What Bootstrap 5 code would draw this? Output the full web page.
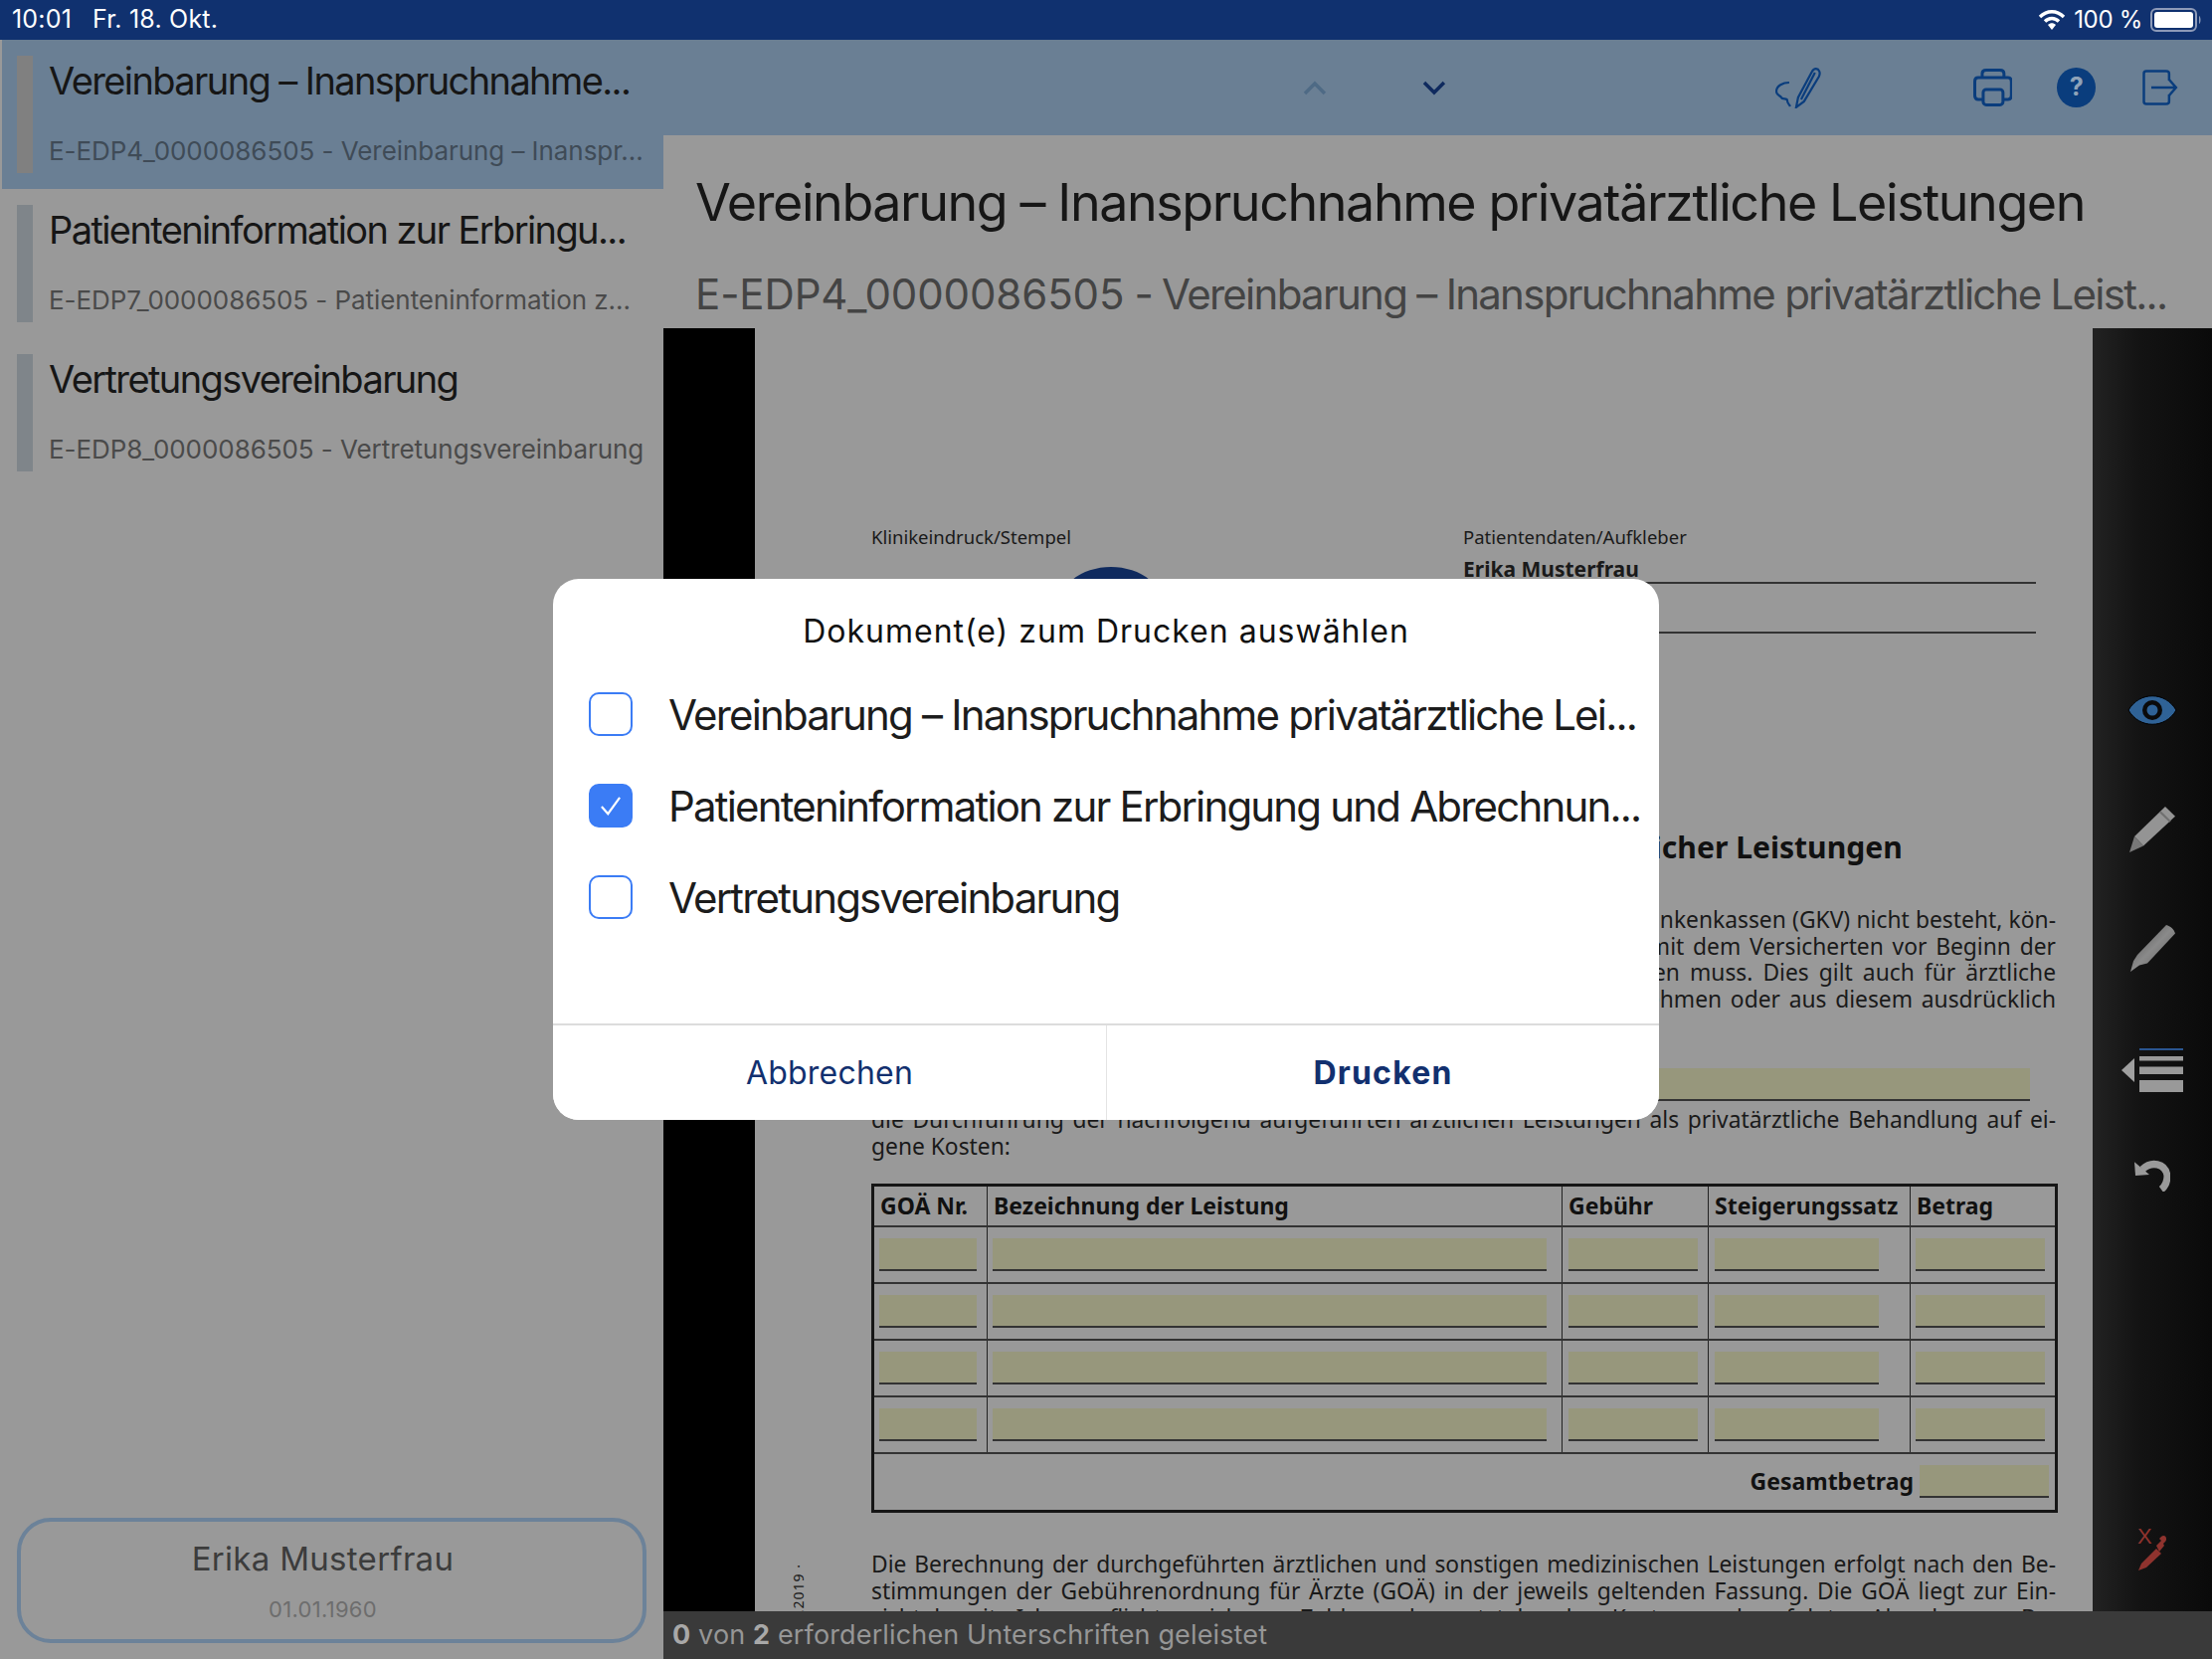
<!DOCTYPE html>
<html lang="de">
<head>
  <meta charset="UTF-8">
  <title>Dokumente drucken</title>
  <link rel="stylesheet" href="https://cdn.jsdelivr.net/npm/bootstrap@5.3.0/dist/css/bootstrap.min.css">
  <style>
    body {
      width: 2224px;
      height: 1668px;
      overflow: hidden;
      background: #999;
      color: #161616;
      font-family: Inter, "Noto Sans", sans-serif;
      position: relative;
    }
    .status-bar {
      height: 40px;
      background: #10316f;
      color: #fff;
      font-size: 24px;
      padding: 0 10px 0 12px;
    }
    .status-clock { font-size: 25px; letter-spacing: 0.2px; }
    .status-date { font-size: 25px; letter-spacing: 0.2px; margin-left: 21px; }
    .status-level { letter-spacing: -0.3px; }
    .app-body { height: 1628px; }

    .doc-sidebar { width: 667px; height: 1628px; }
    .doc-list .list-group-item {
      height: 150px;
      padding: 16px 0 16px 17px;
      background: transparent;
      border: 0;
      border-radius: 0;
      color: #161616;
      display: flex;
      gap: 16px;
    }
    .doc-list .list-group-item.active { background: #6a7f94; box-shadow: inset 2px 0 #999; }
    .doc-bar { width: 16px; height: 118px; background: #7f858a; flex: none; }
    .active .doc-bar { background: #808080; }
    .doc-title {
      font-size: 38px;
      line-height: 46px;
      margin-top: 2px;
      letter-spacing: -1.6px;
      white-space: nowrap;
    }
    .doc-sub {
      font-size: 26px;
      line-height: 32px;
      margin-top: 32px;
      color: #4a4a4a;
      letter-spacing: -0.06px;
      white-space: nowrap;
    }
    .active .doc-sub { color: #3f4b57; }
    .patient-box {
      margin: auto 17px 16px;
      height: 126px;
      padding-right: 18px;
      border: 4px solid #6c8299;
      border-radius: 34px;
    }
    .patient-name { font-size: 33px; line-height: 40px; color: #3c3c3c; letter-spacing: 0.3px; }
    .patient-birth { font-size: 22px; line-height: 28px; margin-top: 17px; color: #6d6d6d; letter-spacing: 0.3px; }

    .main-col { width: 1557px; }
    .tool-bar {
      height: 96px;
      background: #6a7f94;
      padding-right: 34px;
    }
    .tool-up { margin-left: 643px; }
    .tool-down { margin-left: 96px; }
    .tool-sign { margin-left: 331px; }
    .tool-print { margin-left: 152px; }
    .tool-help {
      margin-left: 45px;
      width: 39px;
      height: 40px;
      background: #0a3d7d;
      color: #8fa3b8;
      font-size: 25px;
      font-weight: 700;
    }
    .tool-exit { margin-left: 47px; }

    .page-head { height: 194px; padding: 37px 0 0 32px; }
    .page-title { font-size: 52px; line-height: 62px; letter-spacing: -1.42px; white-space: nowrap; }
    .page-sub { font-size: 42px; line-height: 50px; margin-top: 36px; color: #444; letter-spacing: -1.73px; white-space: nowrap; }
    .page-sub-id { letter-spacing: -0.12px; }

    .pdf-area { height: 1290px; }
    .pdf-strip { width: 92px; background: #000; flex: none; }
    .pdf-page {
      width: 1345px;
      flex: none;
      position: relative;
      overflow: hidden;
      padding: 198px 37px 0 117px;
      font-family: "Noto Sans", sans-serif;
      font-size: 22.8px;
      color: #1a1a1a;
    }
    .stamp-col { width: 595px; position: relative; }
    .patient-col { width: 576px; }
    .stamp-label { font-size: 18.5px; line-height: 24px; }
    .stamp-arc {
      position: absolute;
      left: 186px;
      top: 42px;
    }
    .sticker-line { height: 50px; border-bottom: 2px solid #333; }
    .sticker-line.first {
      height: 31px;
      font-weight: 700;
      font-size: 21px;
      line-height: 33px;
    }
    .form-heading {
      font-size: 30.1px;
      font-weight: 700;
      line-height: 40px;
      margin-top: 195px;
      color: #111;
      white-space: nowrap;
    }
    .form-lines { margin-top: 40px; line-height: 26.5px; }
    .just-line { text-align: justify; text-align-last: justify; }
    .field-row { margin-top: 56px; padding-right: 26px; line-height: 30px; }
    .fill-box { background: #97977c; border-bottom: 2px solid #333; height: 33px; }
    .field-row .fill-box { flex-grow: 1; margin-left: 12px; }
    .after-field { margin-top: 5px; line-height: 27px; }

    .goa-table {
      --bs-table-bg: transparent;
      --bs-table-color: #111;
      --bs-table-border-color: #222;
      width: 1190px;
      margin: 24px 0 0;
      table-layout: fixed;
      border: 3px solid #161616;
      border-collapse: collapse;
    }
    .goa-table > :not(caption) > * > * { padding: 0; border-width: 1px 1px; border-color: #222; }
    .goa-table tr { border-width: 2px 0; border-color: #333; }
    .goa-table th { height: 41px; font-size: 23px; font-weight: 700; padding-left: 6px; line-height: 28px; white-space: nowrap; vertical-align: middle; }
    .goa-table td { height: 57px; vertical-align: middle; }
    .total-row { padding-right: 6px; height: 56px; }
    .total-label { font-size: 23px; font-weight: 700; margin-right: 6px; }
    .total-row .fill-box { width: 130px; }
    .end-text { margin-top: 38px; line-height: 27px; }
    .side-note {
      position: absolute;
      left: 36px;
      top: 1242px;
      writing-mode: vertical-rl;
      transform: rotate(180deg);
      font-size: 14px;
      line-height: 16px;
      letter-spacing: 1px;
      white-space: nowrap;
    }

    .tool-rail {
      width: 120px;
      flex: none;
      padding: 368px 0 40px;
      background: linear-gradient(90deg, #222 0%, #131313 40%, #0a0a0a 100%);
    }
    .rail-pen { margin-top: 80px; }
    .rail-marker { margin-top: 73px; }
    .rail-list { margin-top: 77px; }
    .rail-undo { margin-top: 66px; }
    .rail-sign { margin-top: auto; }

    .sign-count {
      height: 48px;
      background: #3a3a3a;
      color: #969696;
      font-size: 27px;
      line-height: 48px;
      padding-left: 9px;
      letter-spacing: 0.14px;
    }
    .sign-count strong { color: #a8a8a8; }

    .print-dialog {
      position: absolute;
      left: 556px;
      top: 582px;
      width: 1112px;
      height: 544px;
      background: #fff;
      border: 0;
      border-radius: 26px;
      overflow: hidden;
    }
    .dialog-title { font-size: 32px; line-height: 40px; text-align: center; margin-top: 33px; letter-spacing: 1px; color: #111; }
    .dialog-rows { margin-top: 41px; padding-left: 36px; }
    .dialog-rows .form-check {
      height: 92px;
      margin: 0;
      padding: 0;
      display: flex;
      align-items: flex-start;
      gap: 36px;
    }
    .dialog-rows .print-check[type=checkbox] {
      float: none;
      width: 44px;
      height: 44px;
      margin: 0;
      border: 2px solid #3b7cf5;
      border-radius: 10px;
      flex: none;
    }
    .dialog-rows .print-check:checked[type=checkbox] {
      background-color: #3b7cf5;
      border-color: #3b7cf5;
      --bs-form-check-bg-image: url("data:image/svg+xml,%3csvg xmlns='http://www.w3.org/2000/svg' viewBox='0 0 44 44'%3e%3cpath fill='none' stroke='%23fff' stroke-width='2.4' d='M12 23l7 8L32 13'/%3e%3c/svg%3e");
    }
    .print-label { font-size: 42px; line-height: 46px; letter-spacing: -1.82px; white-space: nowrap; color: #1c1c1c; }
    .dialog-actions { margin-top: auto; height: 97px; border-top: 2px solid #dcdcdc; }
    .dialog-btn {
      width: 50%;
      border: 0;
      border-radius: 0;
      background: #fff;
      color: #12306f;
      font-size: 32px;
      line-height: 40px;
      letter-spacing: 0.2px;
      padding: 0;
    }
    .dialog-btn + .dialog-btn { border-left: 1px solid #e4e4e4; font-weight: 700; letter-spacing: 1.2px; }
  </style>
</head>
<body>
  <div class="status-bar d-flex align-items-center justify-content-between">
    <div><span class="status-clock">10:01</span><span class="status-date">Fr. 18. Okt.</span></div>
    <div class="d-flex align-items-center gap-2">
      <svg width="28" height="20" viewBox="0 0 28 20">
        <path d="M2 7C9 0 19 0 26 7" fill="none" stroke="#fff" stroke-width="3.4"/>
        <path d="M7 11.5C11 7.5 17 7.5 21 11.5" fill="none" stroke="#fff" stroke-width="3.4"/>
        <path d="M10 15C12.500 12.800 15.500 12.800 18 15L14 20Z" fill="#fff"/>
      </svg>
      <span class="status-level">100 %</span>
      <svg width="52" height="24" viewBox="0 0 52 24">
        <rect x="1" y="1" width="45" height="22" rx="5" fill="none" stroke="#8d9ab8" stroke-width="2"/>
        <rect x="4" y="4" width="39" height="16" rx="3" fill="#fff"/>
        <path d="M49 8C51 9 51 15 49 16Z" fill="#8d9ab8"/>
      </svg>
    </div>
  </div>

  <div class="app-body d-flex">
    <aside class="doc-sidebar d-flex flex-column">
      <div class="list-group list-group-flush doc-list">
        <div class="list-group-item active">
          <div class="doc-bar"></div>
          <div>
            <div class="doc-title">Vereinbarung – Inanspruchnahme...</div>
            <div class="doc-sub">E-EDP4_0000086505 - Vereinbarung – Inanspr...</div>
          </div>
        </div>
        <div class="list-group-item">
          <div class="doc-bar"></div>
          <div>
            <div class="doc-title">Patienteninformation zur Erbringu...</div>
            <div class="doc-sub">E-EDP7_0000086505 - Patienteninformation z...</div>
          </div>
        </div>
        <div class="list-group-item">
          <div class="doc-bar"></div>
          <div>
            <div class="doc-title">Vertretungsvereinbarung</div>
            <div class="doc-sub">E-EDP8_0000086505 - Vertretungsvereinbarung</div>
          </div>
        </div>
      </div>
      <div class="patient-box d-flex flex-column align-items-center justify-content-center">
        <div class="patient-name">Erika Musterfrau</div>
        <div class="patient-birth">01.01.1960</div>
      </div>
    </aside>

    <div class="main-col d-flex flex-column">
      <div class="tool-bar d-flex align-items-center">
        <svg class="tool-up" width="24" height="15" viewBox="0 0 24 15"><path d="M2 13L12 3L22 13" fill="none" stroke="#4e6a85" stroke-width="3.500"/></svg>
        <svg class="tool-down" width="24" height="15" viewBox="0 0 24 15"><path d="M2 2L12 12L22 2" fill="none" stroke="#0f2a5e" stroke-width="3.500"/></svg>
        <svg class="tool-sign" width="47" height="41" viewBox="0 0 47 41" fill="none" stroke="#0a3d7d" stroke-width="2.200">
          <path d="M37 4L23 30L21 40L29 34L44 9C46 5 44 1 41 1C39 1 38 2 37 4Z"/>
          <path d="M40 5L26 32"/>
          <path d="M14 15C8 15 1 18 1 24C1 28 5 28 6 30C7 33 12 30 12 33C12 36 14 37 15 39"/>
        </svg>
        <svg class="tool-print" width="40" height="38" viewBox="0 0 40 38" fill="none" stroke="#0a3d7d" stroke-width="3">
          <path d="M9 9V5Q9 1.500 13 1.500H27Q31 1.500 31 5V9"/>
          <path d="M9 31H5Q1.500 31 1.500 27V13Q1.500 9 5 9H35Q38.500 9 38.500 13V27Q38.500 31 35 31H31"/>
          <rect x="10" y="21" width="20" height="15.500" rx="3"/>
        </svg>
        <div class="tool-help rounded-circle d-flex align-items-center justify-content-center">?</div>
        <svg class="tool-exit" width="36" height="36" viewBox="0 0 36 36" fill="none" stroke="#0a3d7d" stroke-width="2.500">
          <path d="M27 11V4Q27 1.500 24 1.500H4Q1.500 1.500 1.500 4V32Q1.500 34.500 4 34.500H24Q27 34.500 27 32V25"/>
          <path d="M9 18H34M27 10L34 18L27 26"/>
        </svg>
      </div>

      <div class="page-head">
        <div class="page-title">Vereinbarung – Inanspruchnahme privatärztliche Leistungen</div>
        <div class="page-sub"><span class="page-sub-id">E-EDP4_0000086505</span> - Vereinbarung – Inanspruchnahme privatärztliche Leist...</div>
      </div>

      <div class="pdf-area d-flex">
        <div class="pdf-strip"></div>
        <div class="pdf-page">
          <div class="d-flex">
            <div class="stamp-col">
              <div class="stamp-label">Klinikeindruck/Stempel</div>
              <svg class="stamp-arc" width="110" height="20" viewBox="0 0 110 20"><ellipse cx="55" cy="44" rx="55" ry="44" fill="#0f2a5e"/></svg>
            </div>
            <div class="patient-col">
              <div class="stamp-label">Patientendaten/Aufkleber</div>
              <div class="sticker-line first mt-1">Erika Musterfrau</div>
              <div class="sticker-line"></div>
            </div>
          </div>
          <div class="form-heading">Vereinbarung über die Inanspruchnahme privatärztlicher Leistungen</div>
          <div class="form-lines">
            <div class="just-line">Wenn eine Leistungspflicht für die Behandlung durch die gesetzlichen Krankenkassen (GKV) nicht besteht, kön-</div>
            <div class="just-line">nen diese Leistungen nur erbracht werden, wenn der Arzt dies vorher mit dem Versicherten vor Beginn der</div>
            <div class="just-line">Behandlung schriftlich vereinbart und der Versicherte dies unterzeichnen muss. Dies gilt auch für ärztliche</div>
            <div class="just-line">Leistungen, die von den gesetzlichen Krankenkassen sonst nicht übernehmen oder aus diesem ausdrücklich</div>
          </div>
          <div class="field-row d-flex align-items-end">
            <span>Hiermit beauftrage ich als Patient</span>
            <div class="fill-box"></div>
          </div>
          <div class="after-field">
            <div class="just-line">die Durchführung der nachfolgend aufgeführten ärztlichen Leistungen als privatärztliche Behandlung auf ei-</div>
            <div>gene Kosten:</div>
          </div>
          <table class="table goa-table">
            <colgroup><col style="width:115px"><col style="width:578px"><col style="width:147px"><col style="width:203px"><col style="width:147px"></colgroup>
            <thead>
              <tr><th>GOÄ Nr.</th><th>Bezeichnung der Leistung</th><th>Gebühr</th><th>Steigerungssatz</th><th>Betrag</th></tr>
            </thead>
            <tbody id="goa-rows"></tbody>
            <tfoot>
              <tr>
                <td colspan="5">
                  <div class="total-row d-flex align-items-center justify-content-end">
                    <span class="total-label">Gesamtbetrag</span>
                    <div class="fill-box"></div>
                  </div>
                </td>
              </tr>
            </tfoot>
          </table>
          <div class="end-text">
            <div class="just-line">Die Berechnung der durchgeführten ärztlichen und sonstigen medizinischen Leistungen erfolgt nach den Be-</div>
            <div class="just-line">stimmungen der Gebührenordnung für Ärzte (GOÄ) in der jeweils geltenden Fassung. Die GOÄ liegt zur Ein-</div>
            <div class="just-line">sicht bereit. Ich verpflichte mich zur Zahlung der entstehenden Kosten nach erfolgter Abrechnung. Be-</div>
          </div>
          <div class="side-note">.2019 ·</div>
        </div>
        <div class="tool-rail d-flex flex-column align-items-center">
          <svg width="50" height="32" viewBox="0 0 50 32">
            <path d="M1 16C12 -3 38 -3 49 16C38 35 12 35 1 16Z" fill="#2f6296" stroke="#000" stroke-width="1"/>
            <circle cx="25" cy="16" r="10" fill="#0a0a0a"/>
            <circle cx="25" cy="16" r="5.500" fill="#2f6296"/>
          </svg>
          <svg class="rail-pen" width="46" height="47" viewBox="0 0 46 44" preserveAspectRatio="none">
            <path d="M36 1L46 10L14 38L5 29Z" fill="#949494"/>
            <path d="M31 6L41 15" stroke="#707070" stroke-width="2"/>
            <path d="M5 29L14 38L0 44Z" fill="#787878"/>
          </svg>
          <svg class="rail-marker" width="46" height="47" viewBox="0 0 46 44" preserveAspectRatio="none">
            <defs><linearGradient id="markerFill" x1="0" y1="0" x2="1" y2="1"><stop offset="0" stop-color="#4a4a4a"/><stop offset="0.5" stop-color="#8a8a8a"/><stop offset="1" stop-color="#5a5a5a"/></linearGradient></defs>
            <path d="M37 0C41 1 45 4 46 8L18 36L10 38L1 44L4 34L8 28Z" fill="url(#markerFill)"/>
          </svg>
          <svg class="rail-list" width="62" height="44" viewBox="0 0 62 44">
            <path d="M0 22L13 10V34Z" fill="#a0a0a0"/>
            <rect x="18" y="0" width="44" height="2" fill="#2a5590"/>
            <rect x="18" y="8" width="44" height="4.500" fill="#999"/>
            <rect x="18" y="18.500" width="44" height="7.500" fill="#999"/>
            <rect x="18" y="32" width="44" height="12" fill="#999"/>
          </svg>
          <svg class="rail-undo" width="36" height="34" viewBox="0 0 36 32" preserveAspectRatio="none">
            <path d="M0 4L1 17L15 16Z" fill="#9a9a9a"/>
            <path d="M8 11C17 3 31 5 33 17C33 22 31 27 27 30" fill="none" stroke="#9a9a9a" stroke-width="7"/>
          </svg>
          <svg class="rail-sign" width="30" height="44" viewBox="0 0 30 44">
            <text x="0" y="16" font-family="Liberation Sans, sans-serif" font-size="22" fill="#8f332e">X</text>
            <path d="M1 43L4 36L19 21L24 26L9 40Z" fill="#8f332e"/>
            <path d="M19 18L24 13L22 11L24 9C26 7 29 8 29 11C29 12 29 13 28 14L26 16L27 18L22 24Z" fill="#8f332e"/>
          </svg>
        </div>
      </div>

      <div class="sign-count"><strong>0</strong> von <strong>2</strong> erforderlichen Unterschriften geleistet</div>
    </div>
  </div>

  <div class="print-dialog modal-content d-flex flex-column">
    <div class="dialog-title">Dokument(e) zum Drucken auswählen</div>
    <div class="dialog-rows">
      <div class="form-check">
        <input class="form-check-input print-check" type="checkbox" id="doc1">
        <label class="form-check-label print-label" for="doc1">Vereinbarung – Inanspruchnahme privatärztliche Lei...</label>
      </div>
      <div class="form-check">
        <input class="form-check-input print-check" type="checkbox" id="doc2" checked>
        <label class="form-check-label print-label" for="doc2">Patienteninformation zur Erbringung und Abrechnun...</label>
      </div>
      <div class="form-check">
        <input class="form-check-input print-check" type="checkbox" id="doc3">
        <label class="form-check-label print-label" for="doc3">Vertretungsvereinbarung</label>
      </div>
    </div>
    <div class="dialog-actions d-flex">
      <button type="button" class="btn dialog-btn">Abbrechen</button>
      <button type="button" class="btn dialog-btn">Drucken</button>
    </div>
  </div>

  <script>
    // four empty GOÄ rows: width and left offset of the field per column
    const fieldWidths = [98, 557, 130, 165, 130];
    const fieldOffsets = [5, 5, 6, 6, 5];
    const rows = document.getElementById('goa-rows');
    for (let r = 0; r < 4; r++) {
      const tr = document.createElement('tr');
      fieldWidths.forEach((w, i) => {
        const td = document.createElement('td');
        const box = document.createElement('div');
        box.className = 'fill-box';
        box.style.width = w + 'px';
        box.style.marginLeft = fieldOffsets[i] + 'px';
        td.appendChild(box);
        tr.appendChild(td);
      });
      rows.appendChild(tr);
    }
  </script>
</body>
</html>
